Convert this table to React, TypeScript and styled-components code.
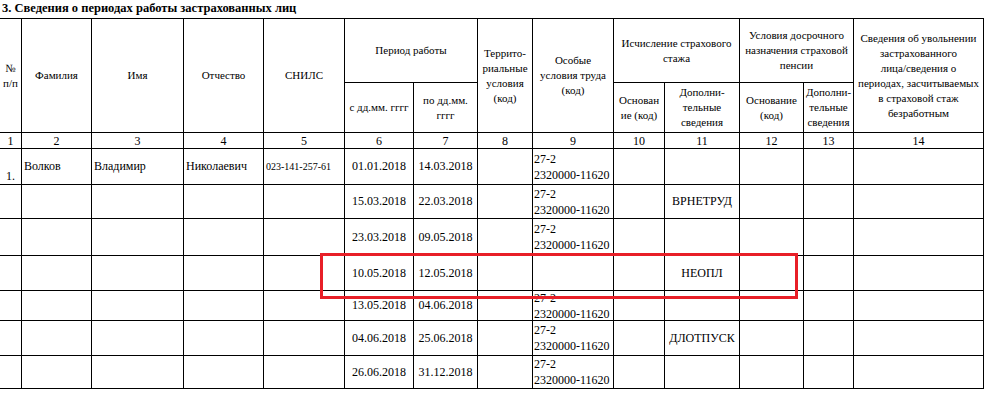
import React from "react";
import styled, { createGlobalStyle } from "styled-components";

const SERIF = `"Liberation Serif", "Times New Roman", serif`;

const GlobalStyle = createGlobalStyle`
  html, body { margin: 0; padding: 0; background: #fff; }
  body { font-family: ${SERIF}; color: #000; }
`;

const Page = styled.div`
  width: 990px;
  height: 396px;
  overflow: hidden;
  background: #fff;
  font-family: ${SERIF};
`;

const Title = styled.div`
  height: 18px;
  box-sizing: border-box;
  padding: 0 0 2px 2px;
  font-size: 12.5px;
  line-height: 16px;
  font-weight: bold;
  white-space: nowrap;
`;

const TableWrap = styled.div`
  position: relative;
  width: 984px;
`;

const Grid = styled.div`
  display: grid;
  grid-template-columns: 22px 70px 92px 80px 81px 69px 64px 55px 81px 51px 75px 64px 50px 130px;
  grid-template-rows: 64px 50px 16px 36px 34px 37px 35px 30px 35px 33px;
  border-top: 1px solid #000;
`;

type CellProps = {
  $cs?: number;
  $rs?: number;
  $align?: "left" | "center";
  $valign?: "top" | "center" | "bottom";
  $size?: number;
  $lh?: number;
  $pad?: number;
};

const Cell = styled.div<CellProps>`
  box-sizing: border-box;
  grid-column: span ${(p) => p.$cs ?? 1};
  grid-row: span ${(p) => p.$rs ?? 1};
  border-right: 1px solid #000;
  border-bottom: 1px solid #000;
  display: flex;
  flex-direction: column;
  justify-content: ${(p) =>
    p.$valign === "top" ? "flex-start" : p.$valign === "bottom" ? "flex-end" : "center"};
  align-items: ${(p) => (p.$align === "left" ? "flex-start" : "center")};
  text-align: ${(p) => p.$align ?? "center"};
  padding: 0 ${(p) => p.$pad ?? 2}px;
  font-size: ${(p) => p.$size ?? 12}px;
  line-height: ${(p) => p.$lh ?? 15}px;
  white-space: nowrap;
  min-width: 0;
`;

const HeadCell = styled(Cell).attrs<CellProps>((p) => ({ $size: p.$size ?? 11, $lh: p.$lh ?? 15 }))``;

const NumCell = styled(Cell).attrs({ $size: 12, $lh: 14 })``;

const Code = styled.span`
  display: block;
`;

const Highlight = styled.div`
  position: absolute;
  left: 320px;
  top: 235px;
  width: 478px;
  height: 46px;
  box-sizing: border-box;
  border: 3px solid #e81f28;
  pointer-events: none;
`;

type Row = {
  n?: string;
  fam?: string;
  name?: string;
  otch?: string;
  snils?: string;
  from: string;
  to: string;
  cond: boolean;
  extra?: string;
};

const rows: Row[] = [
  {
    n: "1.",
    fam: "Волков",
    name: "Владимир",
    otch: "Николаевич",
    snils: "023-141-257-61",
    from: "01.01.2018",
    to: "14.03.2018",
    cond: true,
  },
  { from: "15.03.2018", to: "22.03.2018", cond: true, extra: "ВРНЕТРУД" },
  { from: "23.03.2018", to: "09.05.2018", cond: true },
  { from: "10.05.2018", to: "12.05.2018", cond: false, extra: "НЕОПЛ" },
  { from: "13.05.2018", to: "04.06.2018", cond: true },
  { from: "04.06.2018", to: "25.06.2018", cond: true, extra: "ДЛОТПУСК" },
  { from: "26.06.2018", to: "31.12.2018", cond: true },
];

export default function App() {
  return (
    <Page>
      <GlobalStyle />
      <Title>3. Сведения о периодах работы застрахованных лиц</Title>
      <TableWrap>
        <Grid>
          <HeadCell $rs={2} $pad={0}>
            №<br />п/п
          </HeadCell>
          <HeadCell $rs={2}>Фамилия</HeadCell>
          <HeadCell $rs={2}>Имя</HeadCell>
          <HeadCell $rs={2}>Отчество</HeadCell>
          <HeadCell $rs={2}>СНИЛС</HeadCell>
          <HeadCell $cs={2}>Период работы</HeadCell>
          <HeadCell $rs={2} $pad={0}>
            Террито-
            <br />
            риальные
            <br />
            условия
            <br />
            (код)
          </HeadCell>
          <HeadCell $rs={2} $pad={0}>
            Особые
            <br />
            условия труда
            <br />
            (код)
          </HeadCell>
          <HeadCell $cs={2}>
            Исчисление страхового
            <br />
            стажа
          </HeadCell>
          <HeadCell $cs={2} $pad={0}>
            Условия досрочного
            <br />
            назначения страховой
            <br />
            пенсии
          </HeadCell>
          <HeadCell $rs={2} $pad={0}>
            Сведения об увольнении
            <br />
            застрахованного
            <br />
            лица/сведения о
            <br />
            периодах, засчитываемых
            <br />в страховой стаж
            <br />
            безработным
          </HeadCell>

          <HeadCell $pad={0}>с дд.мм. гггг</HeadCell>
          <HeadCell>
            по дд.мм.
            <br />
            гггг
          </HeadCell>
          <HeadCell $pad={0}>
            Основан
            <br />
            ие (код)
          </HeadCell>
          <HeadCell $pad={0}>
            Дополни-
            <br />
            тельные
            <br />
            сведения
          </HeadCell>
          <HeadCell $pad={0}>
            Основание
            <br />
            (код)
          </HeadCell>
          <HeadCell $pad={0}>
            Дополни-
            <br />
            тельные
            <br />
            сведения
          </HeadCell>

          {Array.from({ length: 14 }, (_, i) => (
            <NumCell key={i}>{i + 1}</NumCell>
          ))}

          {rows.map((r, i) => (
            <React.Fragment key={i}>
              <Cell $valign="bottom" $lh={16}>
                {r.n ?? ""}
              </Cell>
              <Cell $align="left">{r.fam ?? ""}</Cell>
              <Cell $align="left">{r.name ?? ""}</Cell>
              <Cell $align="left">{r.otch ?? ""}</Cell>
              <Cell $align="left" $size={10}>
                {r.snils ?? ""}
              </Cell>
              <Cell>{r.from}</Cell>
              <Cell>{r.to}</Cell>
              <Cell />
              <Cell $align="left" $lh={16} $pad={1}>
                {r.cond ? (
                  <>
                    <Code>27-2</Code>
                    <Code>2320000-11620</Code>
                  </>
                ) : null}
              </Cell>
              <Cell />
              <Cell>{r.extra ?? ""}</Cell>
              <Cell />
              <Cell />
              <Cell />
            </React.Fragment>
          ))}
        </Grid>
        <Highlight />
      </TableWrap>
    </Page>
  );
}
